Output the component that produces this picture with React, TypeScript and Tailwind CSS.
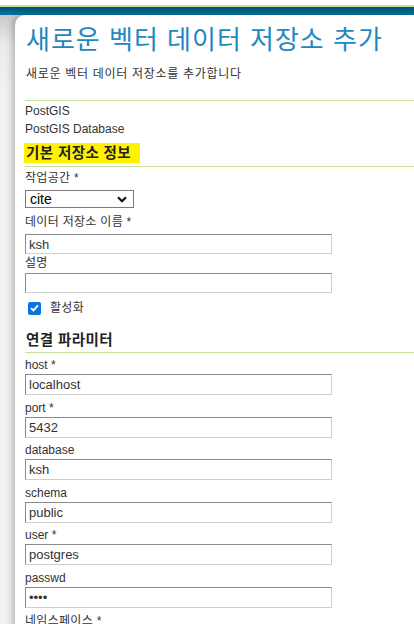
const labelCls = "h-[14px] leading-[14px] text-[12px] text-[#333]";
const inputCls =
  "block w-[307px] border border-t-[#8a8a8a] border-l-[#8a8a8a] border-b-[#cfcfcf] border-r-[#cfcfcf] bg-white px-[3px] text-[13px] leading-[18px] text-[#333] outline-none";

function Field({ label, value }: { label: string; value: string }) {
  return (
    <div className="mb-[5.6px]">
      <div className={labelCls + " mb-[2px]"}>{label}</div>
      <input className={inputCls + " h-[21px]"} type="text" defaultValue={value} readOnly />
    </div>
  );
}

export default function App() {
  return (
    <div
      className="min-h-screen overflow-hidden bg-[#f1f1f1]"
      style={{ fontFamily: '"Liberation Sans", "Noto Sans CJK KR", sans-serif' }}
    >
      {/* top header band */}
      <div className="h-[5px] bg-white" />
      <div className="h-[2px] bg-[#c8e0a4]" />
      <div className="h-[43px] bg-[linear-gradient(to_bottom,#00506e_0px,#0a7fb3_10px,#0a8cc4_30px,#0a8cc4_43px)]" />

      <div className="bg-[linear-gradient(to_bottom,#c9c9c9_0px,#ebebeb_30px,#f1f1f1_80px)]">
        <div className="relative -mt-[35px] ml-[15px] rounded-tl-[10px] bg-white pb-10 pl-[10px] shadow-[-3px_0_6px_rgba(0,0,0,0.22)]">
          <div className="pt-[10px]">
            <h1 className="h-[30px] pl-[1px] text-[26px] leading-[30px] font-normal tracking-[1px] text-[#1e88c0]">
              새로운 벡터 데이터 저장소 추가
            </h1>
            <p className="mt-[11px] h-[16px] pl-[1px] text-[12px] leading-[16px] tracking-[0.7px] text-[#333]">
              새로운 벡터 데이터 저장소를 추가합니다
            </p>
          </div>

          <div className="mt-[18px] h-[1px] bg-[#c5df9c]" />
          <div className="mt-[1px] h-[18px] text-[12px] leading-[18px] text-[#333]">PostGIS</div>
          <div className="h-[18px] text-[12px] leading-[18px] text-[#333]">PostGIS Database</div>

          <div className="mt-[5px] -ml-[1px] inline-block h-[20px] bg-[#fff200] pr-[9px] pl-[2px] text-[14.5px] leading-[20px] font-bold tracking-[0.4px] text-[#222]">
            기본 저장소 정보
          </div>
          <div className="mt-[1px] h-[1px] bg-[#c5df9c]" />

          <div className={labelCls + " mt-[4px] tracking-[0.3px]"}>작업공간 *</div>
          <div className="mt-[5px] flex h-[18px] w-[109px] items-center justify-between border border-[#7a7a7a] bg-white pr-[6px] pl-[4px] text-[14px] text-black">
            <span className="leading-[16px]">cite</span>
            <svg width="10" height="7" viewBox="0 0 10 7">
              <path d="M1 1.2 L5 5.2 L9 1.2" fill="none" stroke="#111" strokeWidth="2.2" />
            </svg>
          </div>

          <div className={labelCls + " mt-[7px] tracking-[0.3px]"}>데이터 저장소 이름 *</div>
          <input className={inputCls + " mt-[5px] h-[20px]"} defaultValue="ksh" readOnly />
          <div className={labelCls + " mt-[2px] tracking-[0.3px]"}>설명</div>
          <input className={inputCls + " mt-[3px] h-[20px]"} defaultValue="" readOnly />

          <div className="mt-[7px] flex h-[16px] items-center">
            <span className="ml-[3px] flex h-[13px] w-[13px] items-center justify-center rounded-[2px] bg-[#0a75e0]">
              <svg width="9" height="8" viewBox="0 0 9 8">
                <path d="M1 4.2 L3.4 6.4 L8 1.4" fill="none" stroke="white" strokeWidth="1.8" />
              </svg>
            </span>
            <span className="ml-[9px] text-[12px] tracking-[0.3px] text-[#333]">활성화</span>
          </div>

          <div className="mt-[14px] h-[20px] pl-[1px] text-[14.5px] leading-[20px] font-bold tracking-[0.4px] text-[#222]">
            연결 파라미터
          </div>
          <div className="mt-[2px] h-[1px] bg-[#c5df9c]" />

          <div className="mt-[5px]">
            <Field label="host *" value="localhost" />
            <Field label="port *" value="5432" />
            <Field label="database" value="ksh" />
            <Field label="schema" value="public" />
            <Field label="user *" value="postgres" />
            <Field label="passwd" value="••••" />
            <div className={labelCls + " tracking-[0.3px]"}>네임스페이스 *</div>
          </div>
        </div>
      </div>
    </div>
  );
}
